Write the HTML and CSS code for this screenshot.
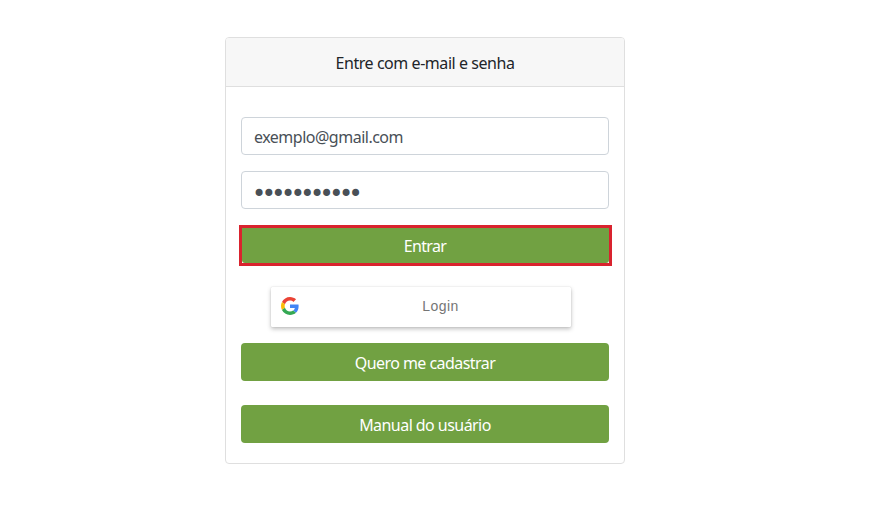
FILE: index.html
```html
<!DOCTYPE html>
<html lang="pt-BR">
<head>
<meta charset="utf-8">
<title>Login</title>
<link rel="stylesheet" href="styles.css">
</head>
<body>
<main class="card">
  <header class="card-header"><span class="title">Entre com e-mail e senha</span></header>
  <form class="card-body">
    <input class="field email" type="text" value="exemplo@gmail.com">
    <input class="field password" type="password" value="abcdefghijk">
    <div class="highlight"><button class="btn enter" type="button">Entrar</button></div>
    <button class="google" type="button">
      <svg class="google-logo" viewBox="0 0 48 48" aria-hidden="true">
        <path fill="#EA4335" d="M24 9.5c3.54 0 6.71 1.22 9.21 3.6l6.85-6.85C35.9 2.38 30.47 0 24 0 14.62 0 6.51 5.38 2.56 13.22l7.98 6.19C12.43 13.72 17.74 9.5 24 9.5z"/>
        <path fill="#4285F4" d="M46.98 24.55c0-1.57-.15-3.09-.38-4.55H24v9.02h12.94c-.58 2.96-2.26 5.48-4.78 7.18l7.73 6c4.51-4.18 7.09-10.36 7.09-17.65z"/>
        <path fill="#FBBC05" d="M10.53 28.59c-.48-1.45-.76-2.99-.76-4.59s.27-3.14.76-4.59l-7.98-6.19C.92 16.46 0 20.12 0 24c0 3.88.92 7.54 2.56 10.78l7.97-6.19z"/>
        <path fill="#34A853" d="M24 48c6.48 0 11.93-2.13 15.89-5.81l-7.73-6c-2.15 1.45-4.92 2.3-8.16 2.3-6.26 0-11.57-4.22-13.47-9.91l-7.98 6.19C6.51 42.62 14.62 48 24 48z"/>
      </svg>
      <span class="google-label">Login</span>
    </button>
    <button class="btn register" type="button">Quero me cadastrar</button>
    <button class="btn manual" type="button">Manual do usuário</button>
  </form>
</main>
</body>
</html>
```
FILE: styles.css
```css
* { box-sizing: border-box; }
body {
  margin: 0;
  background: #fff;
  color: #212529;
  font: 16px/24px "Noto Sans", "Open Sans", sans-serif;
  letter-spacing: -0.45px;
}
.card {
  width: 400px;
  height: 427px;
  margin: 37px 0 0 225px;
  border: 1px solid #dfdfdf;
  border-radius: 4px;
  background: #fff;
}
.card-header {
  height: 49px;
  padding-top: 13px;
  border-bottom: 1px solid #dfdfdf;
  border-radius: 3px 3px 0 0;
  background: #f7f7f7;
  text-align: center;
}
.card-body {
  display: flex;
  flex-direction: column;
  padding: 30px 15px 20px;
}
.field {
  width: 368px;
  height: 38px;
  padding: 7px 12px 5px;
  border: 1px solid #ced4da;
  border-radius: 4px;
  background: #fff;
  color: #495057;
  font: inherit;
  letter-spacing: -0.5px;
}
.password {
  margin-top: 16px;
  padding: 10px 10px 2px;
  font: 24px/24px "DejaVu Sans", sans-serif;
  letter-spacing: -4.5px;
}
.highlight {
  width: 373px;
  height: 41px;
  margin: 16px 0 0 -2px;
  border: 3px solid #d9232e;
  background: #fff;
}
.btn {
  width: 368px;
  height: 38px;
  padding: 2px 0 0;
  border: 0;
  border-radius: 4px;
  background: #71a142;
  color: #fff;
  font: inherit;
  letter-spacing: -0.55px;
}
.enter {
  display: block;
  width: 367px;
  height: 35px;
  padding: 0 1px 0 0;
  border-radius: 0 0 3px 3px;
  letter-spacing: -0.65px;
}
.google {
  display: flex;
  align-items: center;
  width: 300px;
  height: 40px;
  margin: 21px 0 0 30px;
  padding: 0 10px 2px;
  border: 0;
  border-radius: 1px;
  background: #fff;
  box-shadow: 0 2px 4px rgba(0, 0, 0, .25), 0 0 1px rgba(0, 0, 0, .25);
  color: #757575;
}
.google-logo { width: 18px; height: 18px; }
.google-label {
  flex: 1;
  padding-left: 21px;
  font: 14px/20px "Liberation Sans", Arial, sans-serif;
  letter-spacing: .41px;
  text-align: center;
}
.register { margin-top: 16px; }
.manual { margin-top: 24px; }
```
